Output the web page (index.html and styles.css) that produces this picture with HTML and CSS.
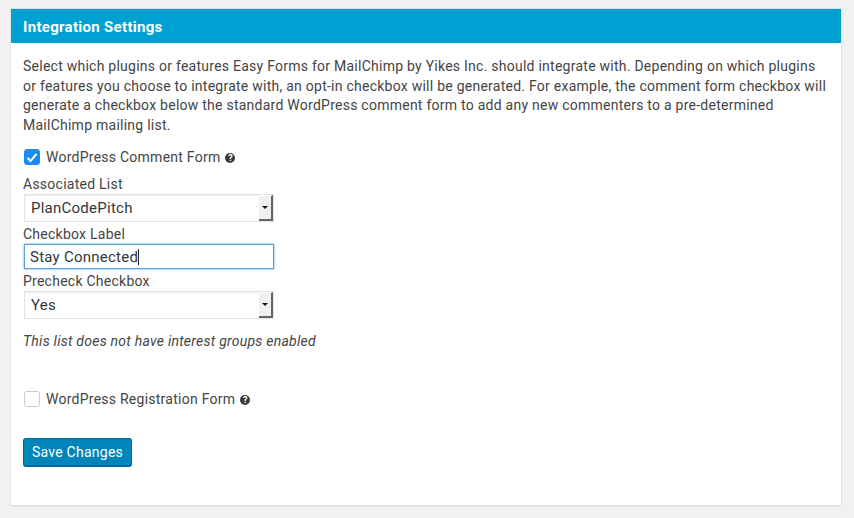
FILE: index.html
```html
<!DOCTYPE html>
<html lang="en">
<head>
  <meta charset="UTF-8" />
  <meta name="viewport" content="width=device-width, initial-scale=1.0"/>
  <title>Integration Settings</title>
  <link rel="stylesheet" href="styles.css">
</head>
<body>

  <div class="card">
    <h2 class="card-title">Integration Settings</h2>

    <div class="card-body">
      <p class="intro">Select which plugins or features Easy Forms for MailChimp by Yikes Inc. should integrate with. Depending on which plugins or features you choose to integrate with, an opt-in checkbox will be generated. For example, the comment form checkbox will generate a checkbox below the standard WordPress comment form to add any new commenters to a pre-determined MailChimp mailing list.</p>

      <!-- Comment form -->
      <div class="check-row">
        <span class="checkbox checked">
          <svg width="12" height="11" viewBox="0 0 12 11"><path d="M1.5 6 L4.6 9 L10.5 1.8" fill="none" stroke="#fff" stroke-width="2"/></svg>
        </span>
        <span class="check-label">WordPress Comment Form</span>
        <span class="help">?</span>
      </div>

      <label class="field-label">Associated List</label>
      <div class="select">
        <span class="select-value">PlanCodePitch</span>
        <span class="select-btn"><span class="caret"></span></span>
      </div>

      <label class="field-label label-second">Checkbox Label</label>
      <div class="text-input">Stay Connected<span class="cursor"></span></div>

      <label class="field-label label-third">Precheck Checkbox</label>
      <div class="select">
        <span class="select-value">Yes</span>
        <span class="select-btn"><span class="caret"></span></span>
      </div>

      <p class="note">This list does not have interest groups enabled</p>

      <!-- Registration form -->
      <div class="check-row row-registration">
        <span class="checkbox"></span>
        <span class="check-label">WordPress Registration Form</span>
        <span class="help">?</span>
      </div>

      <button class="save-btn">Save Changes</button>
    </div>
  </div>

</body>
</html>
```

FILE: styles.css
```css
body {
  margin: 0;
  height: 518px;
  overflow: hidden;
  padding: 8px 13px 0 11px;
  box-sizing: border-box;
  background: #f1f1f1;
  font-family: Roboto, Arial, sans-serif;
  font-size: 14px;
  letter-spacing: 0.25px;
  color: #444;
}

.card {
  height: 497px;
  background: #fff;
  box-shadow: 0 1px 2px rgba(0, 0, 0, 0.12);
}

.card-title {
  margin: 0;
  height: 35px;
  line-height: 36px;
  padding-left: 12px;
  background: #00a0d2;
  color: #fff;
  font-size: 15px;
  font-weight: 700;
  letter-spacing: 0.3px;
  border-top: 1px solid #cfe3ea;
  box-sizing: border-box;
}

.card-body {
  padding: 14px 12px 0;
}

.intro {
  margin: 0;
  line-height: 19.5px;
}

.check-row {
  display: flex;
  align-items: center;
  margin-top: 12px;
  height: 20px;
}

.checkbox {
  width: 14px;
  height: 14px;
  margin-left: 1px;
  margin-right: 6px;
  border: 1px solid #ccc;
  border-radius: 3px;
  display: flex;
  align-items: center;
  justify-content: center;
}

.checkbox.checked {
  background: #1a8cf0;
  border-color: #1a8cf0;
}

.help {
  width: 10px;
  height: 10px;
  margin-left: 5px;
  margin-top: 1px;
  border-radius: 50%;
  background: #3a3a3a;
  color: #fff;
  font-size: 9px;
  font-weight: 700;
  letter-spacing: 0;
  line-height: 10px;
  text-align: center;
}

.field-label {
  display: block;
  line-height: 20px;
  margin-top: 7px;
}

.label-second,
.label-third {
  margin-top: 2px;
}

.select {
  width: 250px;
  height: 28px;
  margin-left: 1px;
  display: flex;
  justify-content: space-between;
  border: 1px solid #e2e2e2;
  box-sizing: border-box;
  box-shadow: inset 0 1px 2px rgba(0, 0, 0, 0.07);
  color: #32373c;
  font-size: 15px;
}

.select-value {
  padding-left: 6px;
  line-height: 27px;
}

.select-btn {
  width: 14px;
  background: #f0f0f0;
  border-top: 1px solid #fff;
  border-right: 2px solid #666;
  border-bottom: 2px solid #666;
  box-sizing: border-box;
  display: flex;
  align-items: center;
  justify-content: center;
}

.caret {
  border-left: 3px solid transparent;
  border-right: 3px solid transparent;
  border-top: 3px solid #111;
}

.text-input {
  width: 250px;
  height: 25px;
  margin-left: 1px;
  padding-left: 5px;
  line-height: 24px;
  border: 1px solid #5b9dd9;
  box-sizing: border-box;
  box-shadow: 0 0 2px rgba(30, 140, 190, 0.8);
  color: #32373c;
  font-size: 15px;
}

.cursor {
  display: inline-block;
  width: 1px;
  height: 16px;
  vertical-align: -3px;
  background: #222;
}

.note {
  margin: 12px 0 0;
  font-style: italic;
  line-height: 20px;
}

.row-registration {
  margin-top: 38px;
}

.save-btn {
  display: block;
  margin-top: 29px;
  width: 109px;
  height: 29px;
  padding: 0;
  background: #0085ba;
  border: 1px solid #006799;
  border-bottom-width: 2px;
  border-radius: 3px;
  color: #fff;
  font-family: inherit;
  font-size: 14px;
  letter-spacing: inherit;
  cursor: pointer;
}
```
